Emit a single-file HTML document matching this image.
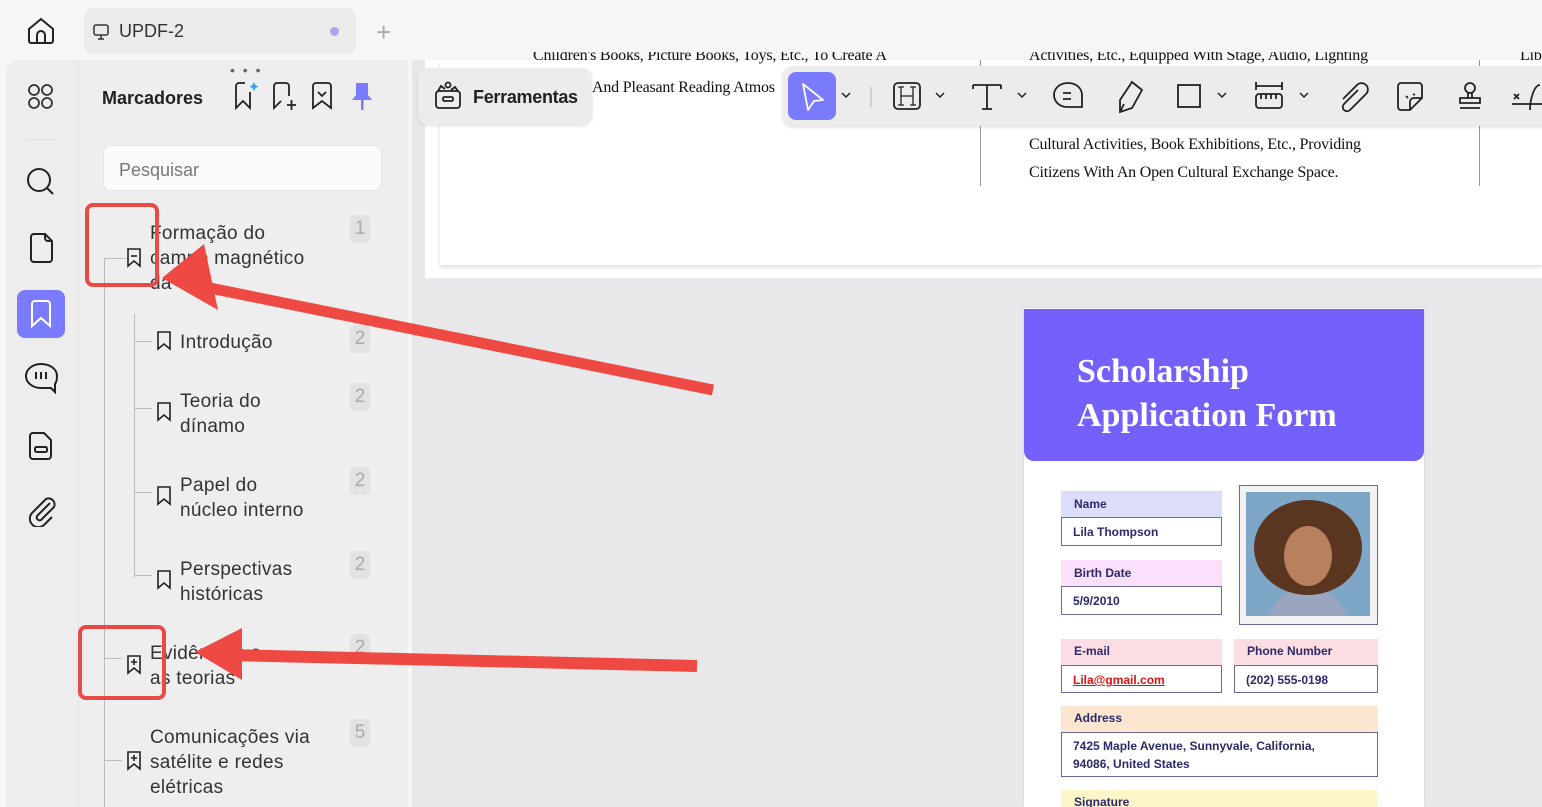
<!DOCTYPE html>
<html><head><meta charset="utf-8"><style>
*{margin:0;padding:0;box-sizing:border-box}
html,body{width:1542px;height:807px;overflow:hidden}
body{background:#f6f6f7;font-family:"Liberation Sans",sans-serif;position:relative;color:#222}
.a{position:absolute}
.tree{font-size:19px;color:#333;line-height:25px;letter-spacing:.3px}
.num{position:absolute;left:350px;width:20px;height:28px;background:#e2e2e2;border-radius:5px;color:#aaa;font-size:19px;text-align:center;line-height:28px}
.serif{font-family:"Liberation Serif",serif;font-size:16px;color:#111;letter-spacing:-.2px}
.lbl{position:absolute;font-size:12px;font-weight:bold;color:#2b2a6a;padding-left:13px;line-height:26px}
.box{position:absolute;border:1.5px solid #6b6aa0;background:#fff;font-size:12px;font-weight:bold;color:#2b2a6a;padding-left:11px}
</style></head><body>
<svg class="a" style="left:26px;top:16px" width="30" height="30" viewBox="0 0 30 30" fill="none" stroke="#222" stroke-width="2"><path d="M3 13L15 3l12 10v12a2 2 0 0 1-2 2H5a2 2 0 0 1-2-2z"/><path d="M11 27v-8a4 4 0 0 1 8 0v8"/></svg>
<div class="a" style="left:84px;top:8px;width:272px;height:46px;background:#ebebeb;border-radius:10px"></div>
<svg class="a" style="left:92px;top:23px" width="18" height="18" viewBox="0 0 18 18" fill="none" stroke="#333" stroke-width="1.5"><rect x="2" y="2" width="14" height="10" rx="2"/><path d="M9 12v4M6 16h6"/></svg>
<div class="a" style="left:119px;top:21px;font-size:18px;color:#333">UPDF-2</div>
<div class="a" style="left:330px;top:27px;width:9px;height:9px;border-radius:50%;background:#a8a8f0"></div>
<div class="a" style="left:376px;top:21px;font-size:26px;color:#aaa;line-height:22px;font-weight:300">+</div>
<div class="a" style="left:6px;top:60px;width:402px;height:747px;background:#ededed;border-radius:12px 12px 0 0"></div>
<div class="a" style="left:78px;top:60px;width:1px;height:747px;background:#e2e2e2"></div>
<div class="a" style="left:79px;top:60px;width:329px;height:747px;background:#eeeeee"></div>
<svg class="a" style="left:27px;top:83px" width="28" height="28" viewBox="0 0 28 28" fill="none" stroke="#333" stroke-width="1.8"><rect x="2" y="2" width="10" height="10" rx="5"/><rect x="15" y="2" width="10" height="10" rx="5"/><rect x="2" y="15" width="10" height="10" rx="5"/><rect x="15" y="15" width="10" height="10" rx="5"/></svg>
<div class="a" style="left:26px;top:139px;width:30px;height:1px;background:#ddd"></div>
<svg class="a" style="left:25px;top:166px" width="32" height="32" viewBox="0 0 32 32" fill="none" stroke="#222" stroke-width="2"><circle cx="14" cy="14" r="11"/><path d="M22 22l6 6"/></svg>
<svg class="a" style="left:27px;top:233px" width="28" height="30" viewBox="0 0 28 30" fill="none" stroke="#222" stroke-width="2"><path d="M4 4a3 3 0 0 1 3-3h11l7 7v18a3 3 0 0 1-3 3H7a3 3 0 0 1-3-3z"/><path d="M18 1v4a3 3 0 0 0 3 3h4"/></svg>
<div class="a" style="left:17px;top:290px;width:48px;height:48px;background:#7a7bff;border-radius:8px"></div>
<svg class="a" style="left:30px;top:300px" width="22" height="28" viewBox="0 0 22 28" fill="none" stroke="#fff" stroke-width="2"><path d="M2 4a3 3 0 0 1 3-3h12a3 3 0 0 1 3 3v22l-9-8-9 8z"/></svg>
<svg class="a" style="left:24px;top:362px" width="34" height="32" viewBox="0 0 34 32" fill="none" stroke="#222" stroke-width="2"><path d="M17 2C9 2 2 7 2 14c0 7 7 12 15 12h10l4 4v-8c1.5-2 2-5 2-8C33 7 26 2 17 2z"/><path d="M12 10v7M17 10v7M22 10v7"/></svg>
<svg class="a" style="left:28px;top:431px" width="26" height="30" viewBox="0 0 26 30" fill="none" stroke="#222" stroke-width="2"><path d="M2 5a3 3 0 0 1 3-3h11l7 7v16a3 3 0 0 1-3 3H5a3 3 0 0 1-3-3z"/><rect x="7" y="16" width="12" height="5" rx="1.5"/></svg>
<svg class="a" style="left:28px;top:497px" width="28" height="30" viewBox="0 0 28 30" fill="none" stroke="#222" stroke-width="2"><path d="M22 6l-13 13a3 3 0 0 0 4 4l13-13a6 6 0 0 0-8-8L4 16a8.5 8.5 0 0 0 12 12l8-8"/></svg>
<div class="a" style="left:230px;top:62px;font-size:14px;color:#666;letter-spacing:2px">• • •</div>
<div class="a" style="left:102px;top:88px;font-size:18px;font-weight:bold;color:#222">Marcadores</div>
<svg class="a" style="left:233px;top:80px" width="26" height="30" viewBox="0 0 26 30" fill="none" stroke="#222" stroke-width="1.8"><path d="M3 6a3 3 0 0 1 3-3h6M3 6v22l7-7 7 7V12"/><path d="M21 2l1.5 3 3 1.5-3 1.5-1.5 3-1.5-3-3-1.5 3-1.5z" fill="#3aa0ff" stroke="none"/></svg>
<svg class="a" style="left:271px;top:80px" width="28" height="30" viewBox="0 0 28 30" fill="none" stroke="#222" stroke-width="1.8"><path d="M18 16V6a3 3 0 0 0-3-3H6a3 3 0 0 0-3 3v22l7-7"/><path d="M16 25h9M20.5 20v10"/></svg>
<svg class="a" style="left:311px;top:81px" width="22" height="30" viewBox="0 0 22 30" fill="none" stroke="#222" stroke-width="1.8"><path d="M2 5a3 3 0 0 1 3-3h12a3 3 0 0 1 3 3v22l-9-7-9 7z"/><path d="M7 11l4 4 4-4"/></svg>
<svg class="a" style="left:350px;top:81px" width="24" height="30" viewBox="0 0 24 30" fill="#7a7bff"><path d="M6 2h12v12l4 5H2l4-5z"/><rect x="11" y="18" width="2.5" height="11"/></svg>
<div class="a" style="left:103px;top:145px;width:279px;height:46px;background:#fafafa;border:1px solid #e4e4e4;border-radius:8px"></div>
<div class="a" style="left:119px;top:160px;font-size:18px;color:#777">Pesquisar</div>
<div class="a" style="left:104px;top:258px;width:1px;height:549px;background:#bbb"></div>
<div class="a" style="left:134px;top:314px;width:1px;height:264px;background:#bbb"></div>
<div class="a" style="left:104px;top:258px;width:22px;height:1px;background:#bbb"></div>
<div class="a" style="left:134px;top:341px;width:18px;height:1px;background:#bbb"></div>
<div class="a" style="left:134px;top:408px;width:18px;height:1px;background:#bbb"></div>
<div class="a" style="left:134px;top:492px;width:18px;height:1px;background:#bbb"></div>
<div class="a" style="left:134px;top:575px;width:18px;height:1px;background:#bbb"></div>
<div class="a" style="left:104px;top:658px;width:18px;height:1px;background:#bbb"></div>
<div class="a" style="left:104px;top:760px;width:18px;height:1px;background:#bbb"></div>
<div class="a tree" style="left:150px;top:221px">Formação do<br>campo magnético<br>da</div>
<div class="num" style="top:215px">1</div>
<div class="a tree" style="left:180px;top:330px">Introdução</div><div class="num" style="top:325px">2</div>
<div class="a tree" style="left:180px;top:389px">Teoria do<br>dínamo</div><div class="num" style="top:383px">2</div>
<div class="a tree" style="left:180px;top:473px">Papel do<br>núcleo interno</div><div class="num" style="top:467px">2</div>
<div class="a tree" style="left:180px;top:557px">Perspectivas<br>históricas</div><div class="num" style="top:551px">2</div>
<div class="a tree" style="left:150px;top:641px">Evidências e<br>as teorias</div><div class="num" style="top:634px">2</div>
<div class="a tree" style="left:150px;top:725px">Comunicações via<br>satélite e redes<br>elétricas</div><div class="num" style="top:719px">5</div>
<svg class="a" style="left:127px;top:248px" width="14" height="20" viewBox="0 0 14 20" fill="none" stroke="#222" stroke-width="1.6"><path d="M1 1h12v17l-6-5-6 5z"/><path d="M4 8h6"/></svg>
<svg class="a" style="left:157px;top:331px" width="14" height="20" viewBox="0 0 14 20" fill="none" stroke="#222" stroke-width="1.6"><path d="M1 1h12v17l-6-5-6 5z"/></svg>
<svg class="a" style="left:157px;top:402px" width="14" height="20" viewBox="0 0 14 20" fill="none" stroke="#222" stroke-width="1.6"><path d="M1 1h12v17l-6-5-6 5z"/></svg>
<svg class="a" style="left:157px;top:486px" width="14" height="20" viewBox="0 0 14 20" fill="none" stroke="#222" stroke-width="1.6"><path d="M1 1h12v17l-6-5-6 5z"/></svg>
<svg class="a" style="left:157px;top:570px" width="14" height="20" viewBox="0 0 14 20" fill="none" stroke="#222" stroke-width="1.6"><path d="M1 1h12v17l-6-5-6 5z"/></svg>
<svg class="a" style="left:127px;top:655px" width="14" height="20" viewBox="0 0 14 20" fill="none" stroke="#222" stroke-width="1.6"><path d="M1 1h12v17l-6-5-6 5z"/><path d="M4 7h6M7 4v6"/></svg>
<svg class="a" style="left:127px;top:751px" width="14" height="20" viewBox="0 0 14 20" fill="none" stroke="#222" stroke-width="1.6"><path d="M1 1h12v17l-6-5-6 5z"/><path d="M4 7h6M7 4v6"/></svg>
<div class="a" style="left:412px;top:60px;width:1130px;height:747px;background:#e8e8ea"></div>
<div class="a" style="left:425px;top:60px;width:1117px;height:218px;background:#fff"></div>
<div class="a" style="left:440px;top:60px;width:1102px;height:205px;background:#fff;box-shadow:0 2px 4px rgba(0,0,0,.15)"></div>
<div class="a" style="left:980px;top:60px;width:1px;height:126px;background:#999"></div>
<div class="a" style="left:1479px;top:60px;width:1px;height:126px;background:#999"></div>
<div class="a serif" style="left:533px;top:52px;width:380px;height:14px;overflow:hidden;line-height:8px">Children's Books, Picture Books, Toys, Etc., To Create A</div>
<div class="a serif" style="left:1029px;top:52px;height:14px;overflow:hidden;line-height:8px">Activities, Etc., Equipped With Stage, Audio, Lighting</div>
<div class="a serif" style="left:1520px;top:52px;height:14px;overflow:hidden;line-height:8px">Lib</div>
<div class="a serif" style="left:592px;top:79px">And Pleasant Reading Atmos</div>
<div class="a serif" style="left:1029px;top:136px">Cultural Activities, Book Exhibitions, Etc., Providing</div>
<div class="a serif" style="left:1029px;top:164px">Citizens With An Open Cultural Exchange Space.</div>
<div class="a" style="left:418px;top:68px;width:174px;height:57px;background:#ececec;border-radius:10px;box-shadow:0 1px 3px rgba(0,0,0,.12)"></div>
<svg class="a" style="left:433px;top:80px" width="30" height="30" viewBox="0 0 30 30" fill="none" stroke="#222" stroke-width="1.8"><rect x="3" y="11" width="24" height="17" rx="3"/><rect x="10" y="17" width="10" height="4" rx="1.5"/><circle cx="15" cy="5" r="2.5"/><path d="M5 11l3-5 4 3M25 11l-3-4-4 3"/></svg>
<div class="a" style="left:473px;top:87px;font-size:18px;font-weight:bold;color:#222;letter-spacing:-.3px">Ferramentas</div>
<div class="a" style="left:783px;top:66px;width:780px;height:60px;background:#ececec;border-radius:10px;box-shadow:0 1px 3px rgba(0,0,0,.15)"></div>
<div class="a" style="left:788px;top:72px;width:48px;height:48px;background:#7a7bff;border-radius:8px"></div>
<svg class="a" style="left:800px;top:82px" width="26" height="30" viewBox="0 0 26 30" fill="none" stroke="#fff" stroke-width="1.8" stroke-linejoin="round"><path d="M3 2l20 16-9 1-6 9z"/></svg>
<svg class="a" style="left:0;top:0" width="1542" height="140" fill="none" stroke="#222" stroke-width="1.8">
<path d="M842 93l4 4 4-4M936 93l4 4 4-4M1018 93l4 4 4-4M1218 93l4 4 4-4M1300 93l4 4 4-4" stroke-width="1.5"/>
<path d="M871 87v20" stroke="#ccc"/>
<rect x="894" y="83" width="26" height="26" rx="4"/><path d="M901 87v18M913 87v18M901 96h12M898 87h6M910 87h6M898 105h6M910 105h6" stroke-width="1.3"/>
<path d="M973 85h28M987 85v24M973 85v4M1001 85v4M982 109h10"/>
<path d="M1068 83c-9 0-14 6-14 12s5 12 13 12h15v-12c0-6-5-12-14-12zM1063 93h8M1063 99h8"/>
<path d="M1132 82l10 8-10 18-12 4 0-12zM1120 112l4-8"/>
<rect x="1178" y="85" width="22" height="22"/>
<path d="M1256 82v8M1282 82v8M1256 86h26"/><rect x="1256" y="94" width="26" height="14" rx="3"/><path d="M1261 94v5M1266 94v5M1271 94v5M1276 94v5"/>
<path d="M1358 90l-14 14a4 4 0 0 0 6 6l16-16a6 6 0 0 0-9-9l-14 14"/>
<path d="M1398 86a3 3 0 0 1 3-3h18a3 3 0 0 1 3 3v12l-12 12h-9a3 3 0 0 1-3-3zM1422 98h-8a4 4 0 0 0-4 4v8M1406 96l2 2M1413 94l2 1"/>
<circle cx="1470" cy="88" r="5"/><path d="M1468 93v5M1472 93v5M1460 98h20v5h-20zM1460 108h20"/>
<path d="M1514 94l5 5M1519 94l-5 5M1512 104h30M1530 110c0-10 4-25 10-25"/>
</svg>
<div class="a" style="left:1024px;top:308px;width:400px;height:499px;background:#fff;box-shadow:0 0 3px rgba(0,0,0,.1)"></div>
<div class="a" style="left:1024px;top:309px;width:400px;height:152px;background:#7460fb;border-radius:0 0 10px 10px"></div>
<div class="a" style="left:1077px;top:350px;font-family:'Liberation Serif',serif;font-weight:bold;font-size:34px;color:#fff;line-height:44px">Scholarship<br>Application Form</div>
<div class="a" style="left:1061px;top:491px;width:161px;height:26px;background:#dcdcfb"></div><div class="lbl" style="left:1061px;top:491px">Name</div>
<div class="box" style="left:1061px;top:517px;width:161px;height:29px;line-height:29px">Lila Thompson</div>
<div class="a" style="left:1061px;top:560px;width:161px;height:26px;background:#fbe0fb"></div><div class="lbl" style="left:1061px;top:560px">Birth Date</div>
<div class="box" style="left:1061px;top:586px;width:161px;height:29px;line-height:29px">5/9/2010</div>
<div class="a" style="left:1061px;top:639px;width:161px;height:26px;background:#fcdde3"></div><div class="lbl" style="left:1061px;top:638px">E-mail</div>
<div class="box" style="left:1061px;top:665px;width:161px;height:28px;line-height:28px;color:#e01010;text-decoration:underline">Lila@gmail.com</div>
<div class="a" style="left:1234px;top:639px;width:144px;height:26px;background:#fcdde3"></div><div class="lbl" style="left:1234px;top:638px">Phone Number</div>
<div class="box" style="left:1234px;top:665px;width:144px;height:28px;line-height:28px">(202) 555-0198</div>
<div class="a" style="left:1061px;top:706px;width:317px;height:26px;background:#fde6cf"></div><div class="lbl" style="left:1061px;top:705px">Address</div>
<div class="box" style="left:1061px;top:732px;width:317px;height:45px;line-height:18px;padding-top:4px">7425 Maple Avenue, Sunnyvale, California,<br>94086, United States</div>
<div class="a" style="left:1061px;top:790px;width:317px;height:17px;background:#fdf6c8"></div><div class="lbl" style="left:1061px;top:789px">Signature</div>
<div class="a" style="left:1239px;top:485px;width:139px;height:140px;border:1.5px solid #6b6aa0;background:#f2f2f2"></div>
<div class="a" style="left:1246px;top:492px;width:124px;height:124px;background:#7ea6c6;overflow:hidden">
<div class="a" style="left:22px;top:95px;width:80px;height:50px;border-radius:40px 40px 0 0;background:#9aa6c0"></div>
<div class="a" style="left:8px;top:8px;width:108px;height:95px;border-radius:50%;background:#5a3520"></div>
<div class="a" style="left:38px;top:34px;width:48px;height:60px;border-radius:50%;background:#b9805e"></div>
</div>
<svg class="a" style="left:0;top:0" width="1542" height="807" fill="none">
<rect x="87" y="205" width="70" height="80" rx="6" stroke="#e94a44" stroke-width="4"/>
<rect x="80" y="627" width="84" height="71" rx="6" stroke="#e94a44" stroke-width="4"/>
<path d="M713 390L205 287" stroke="#ee4a43" stroke-width="11"/>
<path d="M162 278l42-34 14 66z" fill="#ee4a43"/>
<path d="M697 666L230 655" stroke="#ee4a43" stroke-width="12"/>
<path d="M195 652l47-24v52z" fill="#ee4a43"/>
</svg>
</body></html>
